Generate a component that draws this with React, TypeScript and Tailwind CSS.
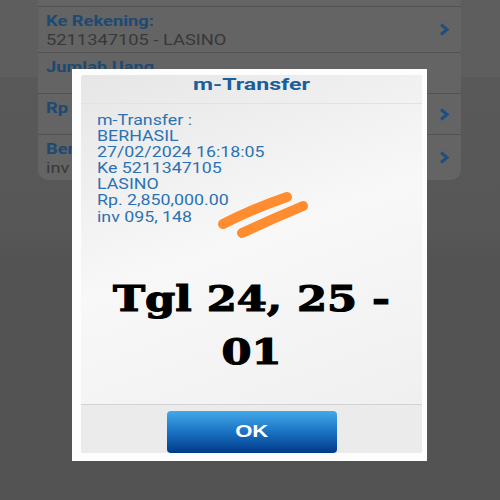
const ROWS = [
  { title: "Ke Rekening:", value: "5211347105 - LASINO", h: "h-[46px]", chevron: true },
  { title: "Jumlah Uang", value: "", h: "h-[41px]", chevron: false },
  { title: "Rp", value: "", h: "h-[41px]", chevron: true },
  { title: "Berita", value: "inv 095, 148", h: "h-[45px]", chevron: true },
];

const RECEIPT = [
  "m-Transfer :",
  "BERHASIL",
  "27/02/2024 16:18:05",
  "Ke 5211347105",
  "LASINO",
  "Rp. 2,850,000.00",
  "inv 095, 148",
];

function Chevron() {
  return (
    <svg width="12" height="13" viewBox="0 0 12 13" className="shrink-0">
      <path
        d="M3 1.5 L9 6.5 L3 11.5"
        fill="none"
        stroke="#1b5080"
        strokeWidth="3"
        strokeLinejoin="miter"
      />
    </svg>
  );
}

function Scribble() {
  return (
    <svg
      width="110"
      height="60"
      viewBox="0 0 110 60"
      className="pointer-events-none absolute left-[131px] top-[114px]"
    >
      <path
        d="M11 35 Q40 20 75 8"
        fill="none"
        stroke="#ff8c2f"
        strokeWidth="10"
        strokeLinecap="round"
      />
      <path
        d="M30 44 Q60 30 91 17"
        fill="none"
        stroke="#ff8c2f"
        strokeWidth="10"
        strokeLinecap="round"
      />
    </svg>
  );
}

export default function App() {
  return (
    <div className="relative h-[500px] w-[500px] overflow-hidden bg-[linear-gradient(to_bottom,#5e5e5e_0px,#5e5e5e_77px,#595959_77px,#575757_225px,#535353_260px,#535353_100%)] font-['Roboto',sans-serif]">
      {/* form behind the dialog */}
      <div className="ml-[38px] w-[423px] overflow-hidden rounded-b-[10px] bg-[#646464]">
        <div className="h-[7px] border-b border-[#525252]" />
        {ROWS.map((r, i) => (
          <div
            key={r.title}
            className={`flex ${r.h} items-center justify-between pl-[8px] pr-[11px] ${
              i < ROWS.length - 1 ? "border-b border-[#525252]" : ""
            }`}
          >
            <div className="h-full pt-[5px] text-[15px] leading-[18.7px]">
              <div className="origin-left scale-x-[1.22] font-bold text-[#1c4a72]">
                {r.title}
              </div>
              {r.value && (
                <div className="origin-left scale-x-[1.22] text-[#383838]">{r.value}</div>
              )}
            </div>
            {r.chevron && <Chevron />}
          </div>
        ))}
      </div>

      {/* dialog */}
      <div className="absolute left-[72px] top-[69px] h-[392px] w-[355px] bg-[#fdfdfd] pb-[8px] pl-[9px] pr-[5px] pt-[6px]">
        <div className="relative flex h-full flex-col overflow-hidden rounded-[2px] bg-[linear-gradient(160deg,#e6e6e6_0%,#f8f8f8_45%,#eeeeee_100%)]">
          <div className="h-[29px] border-b border-[#e2e2e2] pt-[1px]">
            <div className="origin-center scale-x-[1.36] text-center text-[17px] font-bold leading-[17px] text-[#1a5f9c]">
              m-Transfer
            </div>
          </div>

          <div className="pl-[16px] pt-[8px]">
            <div className="origin-left scale-x-[1.27] text-[14px] leading-[16.1px] text-[#2b72b2]">
              {RECEIPT.map((line) => (
                <div key={line}>{line}</div>
              ))}
            </div>
          </div>

          <div className="mt-[47px] origin-center scale-x-[1.2] text-center font-['DejaVu_Serif',serif] text-[36px] font-bold leading-[53px] text-black [-webkit-text-stroke:1.2px_black]">
            <div>Tgl 24, 25 -</div>
            <div>01</div>
          </div>

          <div className="flex-1" />

          <div className="h-[49px] border-t border-[#d2d2d8] bg-[#ebebeb] pt-[6px]">
            <button className="ml-[86px] flex h-[42px] w-[170px] items-center justify-center rounded-[4px] bg-[linear-gradient(to_bottom,#42a9e8_0%,#1a72c4_50%,#003a88_100%)]">
              <span className="scale-x-[1.3] font-['Liberation_Sans',sans-serif] text-[17px] font-bold text-white">
                OK
              </span>
            </button>
          </div>

          <Scribble />
        </div>
      </div>
    </div>
  );
}
